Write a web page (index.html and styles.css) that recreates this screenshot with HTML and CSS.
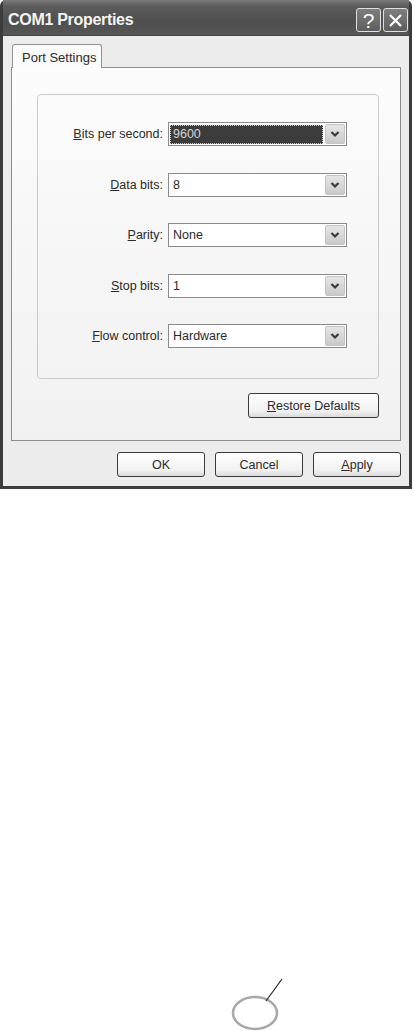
FILE: index.html
```html
<!DOCTYPE html>
<html lang="en">
<head>
    <meta charset="UTF-8">
    <meta name="viewport" content="width=device-width, initial-scale=1.0">
    <link rel="stylesheet" href="styles.css">
    <title>COM1 Properties</title>
</head>
<body>
    <div class="window">
        <div class="titlebar">
            <span class="title">COM1 Properties</span>
            <div class="caption-buttons">
                <button class="cap-btn cap-help">?</button>
                <button class="cap-btn cap-close">
                    <svg width="15" height="15" viewBox="0 0 15 15">
                        <path d="M2 2 L13 13 M13 2 L2 13" stroke="#fff" stroke-width="2.2" fill="none"/>
                    </svg>
                </button>
            </div>
        </div>
        <div class="client">
            <div class="tabs">
                <div class="tab">Port Settings</div>
            </div>
            <div class="panel">
                <div class="group">
                    <div class="row">
                        <label><u>B</u>its per second:</label>
                        <div class="select">
                            <span class="value selected">9600</span>
                            <span class="drop"><svg width="10" height="8" viewBox="0 0 10 8"><path d="M1.5 2 L5 5.5 L8.5 2" stroke="#3a3a3a" stroke-width="2.2" fill="none"/></svg></span>
                        </div>
                    </div>
                    <div class="row">
                        <label><u>D</u>ata bits:</label>
                        <div class="select">
                            <span class="value">8</span>
                            <span class="drop"><svg width="10" height="8" viewBox="0 0 10 8"><path d="M1.5 2 L5 5.5 L8.5 2" stroke="#3a3a3a" stroke-width="2.2" fill="none"/></svg></span>
                        </div>
                    </div>
                    <div class="row">
                        <label><u>P</u>arity:</label>
                        <div class="select">
                            <span class="value">None</span>
                            <span class="drop"><svg width="10" height="8" viewBox="0 0 10 8"><path d="M1.5 2 L5 5.5 L8.5 2" stroke="#3a3a3a" stroke-width="2.2" fill="none"/></svg></span>
                        </div>
                    </div>
                    <div class="row">
                        <label><u>S</u>top bits:</label>
                        <div class="select">
                            <span class="value">1</span>
                            <span class="drop"><svg width="10" height="8" viewBox="0 0 10 8"><path d="M1.5 2 L5 5.5 L8.5 2" stroke="#3a3a3a" stroke-width="2.2" fill="none"/></svg></span>
                        </div>
                    </div>
                    <div class="row">
                        <label><u>F</u>low control:</label>
                        <div class="select">
                            <span class="value">Hardware</span>
                            <span class="drop"><svg width="10" height="8" viewBox="0 0 10 8"><path d="M1.5 2 L5 5.5 L8.5 2" stroke="#3a3a3a" stroke-width="2.2" fill="none"/></svg></span>
                        </div>
                    </div>
                </div>
                <div class="panel-actions">
                    <button class="btn btn-wide"><u>R</u>estore Defaults</button>
                </div>
            </div>
            <div class="dialog-actions">
                <button class="btn">OK</button>
                <button class="btn">Cancel</button>
                <button class="btn"><u>A</u>pply</button>
            </div>
        </div>
    </div>

    <div class="page-mark">
        <svg width="60" height="54" viewBox="0 0 60 54">
            <ellipse cx="27" cy="36" rx="22" ry="16" stroke="#a8a8a8" stroke-width="2.5" fill="none"/>
            <path d="M38 24 L54 2" stroke="#222" stroke-width="1.2"/>
        </svg>
    </div>
</body>
</html>
```

FILE: styles.css
```css
body {
    margin: 0;
    padding: 0;
    background: #fff;
    font-family: "Liberation Sans", Arial, sans-serif;
    color: #2a2a2a;
    height: 1031px;
    display: flex;
    flex-direction: column;
    justify-content: space-between;
}

.window {
    width: 412px;
    box-sizing: border-box;
    border: 3px solid #3c3c3c;
    border-top: none;
    border-radius: 6px 6px 0 0;
    background: #ececec;
}

.titlebar {
    height: 36px;
    box-sizing: border-box;
    display: flex;
    align-items: flex-start;
    justify-content: space-between;
    padding: 0 1px 0 5px;
    background: linear-gradient(#7a7a7a 0, #5c5c5c 18%, #4f4f4f 60%, #565656 100%);
    border-bottom: 1px solid #484848;
}

.title {
    color: #f4f4f4;
    font-size: 16px;
    font-weight: bold;
    letter-spacing: -0.3px;
    margin-top: 11px;
}

.caption-buttons {
    display: flex;
    gap: 2px;
    margin-top: 8px;
}

.cap-btn {
    width: 25px;
    height: 24px;
    padding: 0;
    border: 1px solid #e0e0e0;
    border-radius: 3px;
    background: linear-gradient(#7e7e7e, #5e5e5e);
    color: #fff;
    display: flex;
    align-items: center;
    justify-content: center;
}

.cap-help {
    font-family: "Liberation Sans", Arial, sans-serif;
    font-size: 21px;
    font-weight: normal;
    line-height: 1;
}

.client {
    padding: 8px 8px 9px 8px;
}

.tabs {
    display: flex;
    padding-left: 1px;
    position: relative;
    z-index: 1;
    margin-bottom: -1px;
}

.tab {
    width: 90px;
    height: 24px;
    box-sizing: border-box;
    border: 1px solid #939393;
    border-bottom: none;
    border-radius: 3px 3px 0 0;
    background: #fbfbfb;
    font-size: 13px;
    padding: 5px 0 0 9px;
}

.panel {
    height: 374px;
    box-sizing: border-box;
    border: 1px solid #8e8e8e;
    background: linear-gradient(#fcfcfc, #f1f1f1);
    padding: 26px 21px 21px 25px;
}

.group {
    height: 285px;
    box-sizing: border-box;
    border: 1px solid #cbcbcb;
    border-radius: 4px;
    padding-top: 27px;
    display: flex;
    flex-direction: column;
    gap: 26.5px;
}

.row {
    display: flex;
    align-items: center;
    height: 24px;
}

.row label {
    width: 125px;
    text-align: right;
    font-size: 12.5px;
    margin-right: 5px;
}

.select {
    width: 179px;
    height: 24px;
    box-sizing: border-box;
    border: 1px solid #8a8a8a;
    background: #fff;
    display: flex;
    align-items: center;
    padding: 1px;
    font-size: 12.5px;
}

.value {
    flex: 1;
    padding-left: 3px;
}

.value.selected {
    background: #3c3c3c;
    color: #d4d4d4;
    outline: 1px dotted #c8c8c8;
    outline-offset: -1px;
    height: 19px;
    line-height: 19px;
    margin-right: 2px;
}

.drop {
    width: 20px;
    height: 20px;
    box-sizing: border-box;
    border: 1px solid #c4c4c4;
    border-radius: 2px;
    background: linear-gradient(#e6e6e6, #c9c9c9);
    display: flex;
    align-items: center;
    justify-content: center;
}

.panel-actions {
    display: flex;
    justify-content: flex-end;
    margin-top: 14px;
}

.btn {
    width: 88px;
    height: 25px;
    box-sizing: border-box;
    border: 1px solid #3a3a3a;
    border-radius: 3px;
    background: linear-gradient(#ffffff, #f1f1f1 75%, #dadada);
    font-family: "Liberation Sans", Arial, sans-serif;
    font-size: 12.5px;
    color: #2a2a2a;
    padding: 0;
}

.btn-wide {
    width: 131px;
}

.dialog-actions {
    display: flex;
    justify-content: flex-end;
    gap: 10px;
    margin-top: 11px;
}

.page-mark {
    padding-left: 228px;
    line-height: 0;
}
```
